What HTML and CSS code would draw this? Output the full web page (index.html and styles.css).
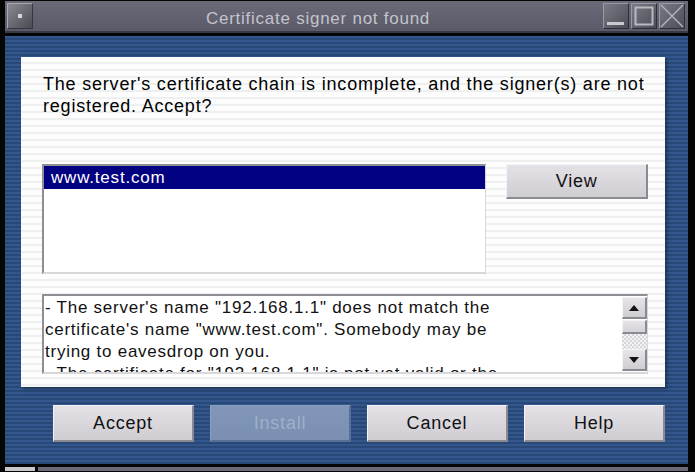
FILE: index.html
```html
<!DOCTYPE html>
<html>
<head>
    <title>Certificate signer not found</title>
    <link rel="stylesheet" href="styles.css">
</head>
<body>
    <div class="screen">
        <div class="titlebar">
            <div class="menu-btn"><span></span></div>
            <div class="title">Certificate signer not found</div>
            <div class="wm-buttons">
                <div class="wm-btn">
                    <svg width="26" height="26" viewBox="0 0 26 26"><rect x="4" y="19" width="17" height="3" fill="#c9c9cf"/></svg>
                </div>
                <div class="wm-btn">
                    <svg width="26" height="26" viewBox="0 0 26 26"><rect x="4.5" y="4.5" width="17" height="17" fill="none" stroke="#b9b9c2" stroke-width="2"/></svg>
                </div>
                <div class="wm-btn">
                    <svg width="26" height="26" viewBox="0 0 26 26"><path d="M2 2 L24 24 M24 2 L2 24" stroke="#b0b0ba" stroke-width="1.5"/></svg>
                </div>
            </div>
        </div>

        <div class="frame">
            <div class="panel">
                <p class="message">The server's certificate chain is incomplete, and the signer(s) are not<br>registered. Accept?</p>

                <div class="cert-row">
                    <div class="listbox">
                        <div class="list-item selected">www.test.com</div>
                    </div>
                    <button class="btn view-btn">View</button>
                </div>

                <div class="details">
                    <div class="details-text">
                        - The server's name "192.168.1.1" does not match the<br>
                        certificate's name "www.test.com". Somebody may be<br>
                        trying to eavesdrop on you.<br>
                        - The certificate for "192.168.1.1" is not yet valid or the
                    </div>
                    <div class="scrollbar">
                        <div class="sb-arrow">
                            <svg width="12" height="8" viewBox="0 0 12 8"><path d="M1 7 L6 1 L11 7 Z" fill="#111"/></svg>
                        </div>
                        <div class="sb-thumb"></div>
                        <div class="sb-trough"></div>
                        <div class="sb-arrow">
                            <svg width="12" height="8" viewBox="0 0 12 8"><path d="M1 1 L11 1 L6 7 Z" fill="#111"/></svg>
                        </div>
                    </div>
                </div>
            </div>

            <div class="actions">
                <button class="btn">Accept</button>
                <button class="btn" disabled>Install</button>
                <button class="btn">Cancel</button>
                <button class="btn">Help</button>
            </div>
        </div>

        <div class="next-window">
            <div class="next-box"></div>
            <div class="next-bar"></div>
        </div>
    </div>
</body>
</html>
```

FILE: styles.css
```css
body {
    margin: 0;
    padding: 0;
    background-color: #000;
    font-family: "Liberation Sans", Arial, sans-serif;
}

.screen {
    width: 695px;
    height: 472px;
    overflow: hidden;
    background-color: #050505;
    padding-top: 1px;
    box-sizing: border-box;
}

/* window title bar */
.titlebar {
    height: 32px;
    margin: 0 7px 0 5px;
    display: flex;
    align-items: center;
    background: linear-gradient(#6a6a78, #5a5a68);
    border-bottom: 2px solid #3a3a44;
    box-sizing: border-box;
}

.menu-btn {
    width: 26px;
    height: 26px;
    margin-left: 2px;
    background: linear-gradient(135deg, #8a8a92, #4a4a52);
    border-top: 1px solid #a8a8b0;
    border-left: 1px solid #a8a8b0;
    border-right: 1px solid #35353d;
    border-bottom: 1px solid #35353d;
    box-sizing: border-box;
    display: flex;
    align-items: center;
    justify-content: center;
}

.menu-btn span {
    width: 4px;
    height: 4px;
    background-color: #d8d8dc;
}

.title {
    flex: 1;
    text-align: center;
    color: #c4c4cc;
    font-size: 17px;
    letter-spacing: 0.75px;
    padding-top: 6px;
}

.wm-buttons {
    display: flex;
    gap: 2px;
    margin-right: 3px;
}

.wm-btn {
    width: 26px;
    height: 26px;
    background: linear-gradient(135deg, #7a7a84, #4c4c56);
    border-top: 1px solid #9a9aa4;
    border-left: 1px solid #9a9aa4;
    border-right: 1px solid #2e2e36;
    border-bottom: 1px solid #2e2e36;
    box-sizing: border-box;
    display: flex;
}

.wm-btn svg {
    margin: -1px;
}

/* blue dialog frame */
.frame {
    margin: 3px 7px 0 5px;
    height: 428px;
    padding: 21px 23px 0 16px;
    box-sizing: border-box;
    background-color: #2e5083;
    background-image: repeating-linear-gradient(#33578c 0, #33578c 2px, #284877 2px, #284877 4px);
}

.panel {
    height: 330px;
    padding: 16px 17px 0 21px;
    box-sizing: border-box;
    background-color: #fbfcfc;
    background-image: repeating-linear-gradient(#fdfdfd 0, #fdfdfd 5px, #eef0f0 5px, #eef0f0 7px);
    box-shadow: 2px 2px 3px rgba(0, 0, 0, 0.35);
}

.message {
    margin: 0 0 0 1px;
    font-size: 18px;
    letter-spacing: 0.8px;
    line-height: 22px;
    color: #000;
    white-space: nowrap;
}

.cert-row {
    display: flex;
    align-items: flex-start;
    margin-top: 47px;
    gap: 20px;
}

.listbox {
    width: 445px;
    height: 110px;
    background-color: #fff;
    border-top: 2px solid #8e8e94;
    border-left: 2px solid #8e8e94;
    border-right: 1px solid #d8d8dc;
    border-bottom: 2px solid #d8d8dc;
    box-sizing: border-box;
}

.list-item {
    height: 23px;
    line-height: 23px;
    padding-left: 7px;
    font-size: 17px;
    letter-spacing: 0.8px;
    color: #000;
}

.list-item.selected {
    background-color: #000080;
    color: #fff;
}

.btn {
    width: 142px;
    height: 37px;
    font-family: "Liberation Sans", Arial, sans-serif;
    font-size: 18px;
    letter-spacing: 0.8px;
    color: #111;
    background: linear-gradient(#e4e1e7, #cfcdd2);
    border-top: 1px solid #f4f4f6;
    border-left: 1px solid #f4f4f6;
    border-right: 2px solid #8a8a90;
    border-bottom: 2px solid #8a8a90;
    padding: 0;
}

.btn:disabled {
    color: #9fb0cb;
    background: linear-gradient(#8196b8, #7a8fb2);
    border-top: 1px solid #8aa0c0;
    border-left: 1px solid #8aa0c0;
    border-right: 2px solid #5a6f94;
    border-bottom: 2px solid #5a6f94;
}

.view-btn {
    height: 35px;
}

/* certificate problems text */
.details {
    display: flex;
    width: 606px;
    height: 80px;
    margin-top: 20px;
    background-color: #fff;
    border-top: 2px solid #8e8e94;
    border-left: 2px solid #8e8e94;
    border-right: 1px solid #d8d8dc;
    border-bottom: 2px solid #d8d8dc;
    box-sizing: border-box;
}

.details-text {
    flex: 1;
    overflow: hidden;
    padding: 1px 0 0 1px;
    font-size: 17px;
    letter-spacing: 0.75px;
    line-height: 22px;
    color: #111;
    white-space: nowrap;
}

.scrollbar {
    width: 25px;
    display: flex;
    flex-direction: column;
    padding: 1px 0;
}

.sb-arrow {
    height: 22px;
    display: flex;
    align-items: center;
    justify-content: center;
    background: linear-gradient(#e6e4e8, #cfcdd2);
    border-top: 1px solid #f4f4f6;
    border-left: 1px solid #f4f4f6;
    border-right: 2px solid #8a8a90;
    border-bottom: 2px solid #8a8a90;
    box-sizing: border-box;
}

.sb-thumb {
    height: 14px;
    margin-top: 1px;
    background: linear-gradient(#e6e4e8, #d4d2d6);
    border-top: 1px solid #f4f4f6;
    border-left: 1px solid #f4f4f6;
    border-right: 2px solid #8a8a90;
    border-bottom: 2px solid #8a8a90;
    box-sizing: border-box;
}

.sb-trough {
    flex: 1;
    background-color: #e8e8ea;
    background-image: repeating-conic-gradient(#d6d6da 0 25%, #f2f2f4 0 50%);
    background-size: 4px 4px;
}

/* button row */
.actions {
    display: flex;
    gap: 16px;
    margin-top: 18px;
    padding-left: 32px;
}

/* edge of the window below */
.next-window {
    display: flex;
    margin: 3px 7px 0 5px;
    height: 4px;
    gap: 3px;
}

.next-box {
    width: 30px;
    background-color: #c8c8cc;
}

.next-bar {
    flex: 1;
    background-color: #6a6a78;
}
```
